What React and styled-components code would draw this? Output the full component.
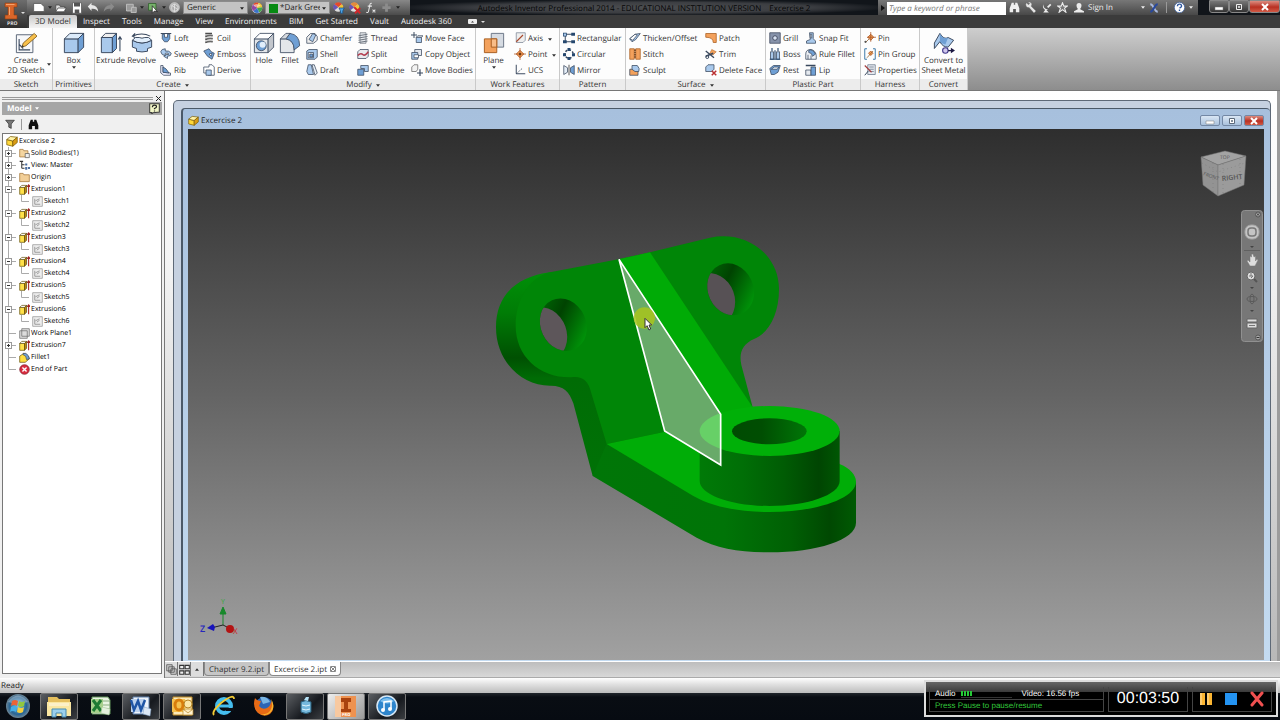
import React from "react";
import styled, { createGlobalStyle } from "styled-components";

const GlobalStyle = createGlobalStyle`
  * { box-sizing: border-box; }
  body { margin: 0; overflow: hidden; }
  button, input, select { font: inherit; color: inherit; margin: 0; padding: 0; border: 0; background: none; text-rendering: inherit; }
  ul { list-style: none; margin: 0; padding: 0; }
`;

const BLUE = "#a9c9ec";
const MID = "#6f9fd4";
const LINE = "#39485e";
const ORANGE = "#f3a15c";
const o = { stroke: LINE, strokeWidth: 1, strokeLinejoin: "round" };
const n = { fill: "none", stroke: LINE, strokeWidth: 1.3 };

const cube = (
  <g stroke={LINE} strokeWidth=".7" strokeLinejoin="round">
    <path fill={BLUE} d="M1 5h10v10H1z" />
    <path fill="#dcebfa" d="M1 5l4-4h10l-4 4z" />
    <path fill={MID} d="M11 5l4-4v10l-4 4z" />
  </g>
);
const yellowCube = (
  <g stroke="#7a5c08" strokeWidth="1" strokeLinejoin="round">
    <path fill="#ffd83a" d="M1 6l8 2v7L1 13z" />
    <path fill="#fff3a6" d="M1 6l5-4 9 1-6 5z" />
    <path fill="#d99b12" d="M9 8l6-5v7l-6 5z" />
  </g>
);

const ICONS = {
  sketch: (
    <g>
      <path fill="#f7f8fa" stroke="#596577" strokeWidth=".7" d="M1 2h12v13H1z" />
      <path {...n} strokeWidth=".8" d="M3 5v8h8M3 9l3 3" />
      <path fill="#f7c04b" stroke="#7a561c" strokeWidth=".6" d="M5 11l1-3 8-7 2 2-8 7z" />
      <path fill="#333" d="M5 11l.5-1.500 1 1z" />
    </g>
  ),
  box: cube,
  extrude: (
    <g>
      <g {...o} strokeWidth=".7"><path fill={BLUE} d="M1 4h8v11H1z" /><path fill="#eee" d="M1 4l3-3h8L9 4z" /><path fill={MID} d="M9 4l3-3v11l-3 3z" /></g>
      <path {...n} strokeWidth=".8" d="M14.500 14V4M13.200 5.500l1.300-2 1.300 2" />
    </g>
  ),
  revolve: (
    <g>
      <path fill={BLUE} {...o} strokeWidth=".7" d="M1 6q7 4 14 0v5l-3 1v2q-4 1-8 0v-2l-3-1z" />
      <path fill="#e1eefb" {...o} strokeWidth=".7" d="M1 6q2-3 5-2 2 1 4 0 3-1 5 2-7 4-14 0z" />
      <path {...n} strokeWidth=".8" d="M1 3q7-3 13 0M3 1L1 3l2 1" />
    </g>
  ),
  loft: <g><path {...n} d="M1 2h14" /><path fill={MID} {...o} d="M3 3h3v4h4V3h3v6l-3 4H6L3 9z" /></g>,
  sweep: <g><path fill={BLUE} {...o} d="M1 5q1-4 6-4v3q5-1 8 3 0 4-5 4v3L5 11l5-3v1q2 0 2-1-2-2-5-1v3q-5 0-6-5z" /></g>,
  rib: <g {...o}><path fill="#eef" d="M1 2h3v9l10 1v3H5l-4-3z" /><path fill={MID} d="M4 4q4 1 8 8l-8-1z" /></g>,
  coil: <g><path fill="none" stroke="#4c4c4c" strokeWidth="2" d="M3 2h9M3 6q5-2 10-1M3 10q5-2 10-1M3 14q5-2 10-1" /><path stroke="#999" fill="none" d="M3 4l10 0M3 8h10M3 12h10" /></g>,
  emboss: <g {...o}><path fill={MID} d="M1 4l7-3 3 4 4 2-3 8-6-4z" /><path fill="#fff" d="M8 8l4-1-1 4z" /></g>,
  derive: <g {...o}><path fill="#fff" d="M1 4h7V1h4l3 3v11H7v-3H1z" /><path fill={BLUE} d="M4 8h7v7H4z" /></g>,
  hole: (
    <g {...o} strokeWidth=".6">
      <path fill="#e3e6ea" d="M1 5h10v10H1z" /><path fill="#fff" d="M1 5l4-4h10l-4 4z" /><path fill="#c2c6cc" d="M11 5l4-4v10l-4 4z" />
      <circle cx="6" cy="10" r="3.600" fill={MID} /><circle cx="7" cy="9.300" r="2.200" fill="#e1eefb" stroke="none" />
    </g>
  ),
  fillet: (
    <g {...o} strokeWidth=".6">
      <path fill="#e3e6ea" d="M1 5v10h10v-3q0-6-6-7z" /><path fill={MID} d="M5 5l3-4q7 1 7 9l-4 3q0-7-6-8z" /><path fill="#d4d8dd" d="M1 5l4-4h3L5 5z" />
    </g>
  ),
  chamfer: <g {...o}><path fill="#eee" d="M1 7l5-5h6l3 4v5l-5 4H1z" /><path fill={BLUE} d="M4 10l5-8 4 2-4 9z" /></g>,
  shell: <g {...o}><path fill={BLUE} d="M1 4l3-2h11v10l-3 3H1z" /><path fill="#fff" d="M3 6h7v7H3z" /><path fill={MID} d="M5 8h4v4H5z" /></g>,
  draft: <g {...o}><path fill={BLUE} d="M3 1h4l3 13H3l-2-4z" /><path fill="#e8f0f8" d="M8 1h3l4 11-3 3z" /></g>,
  thread: <g><path fill="#e6e9ed" stroke="#6c737d" d="M4 1h8v14H4z" /><path stroke="#6c737d" strokeWidth="1.300" d="M2 5l12-2M2 8l12-2M2 11l12-2M2 14l12-2" /></g>,
  split: <g><path fill="#e8e9ed" {...o} d="M1 5l3-3h11v9l-3 3H1z" /><path fill="none" stroke="#b23a4c" strokeWidth="2" d="M1 10q4-4 7-1 3 2 7-4" /></g>,
  combine: <g {...o}><path fill={BLUE} d="M5 2h10v8h-5V6H5z" /><path fill={MID} d="M1 7h8v8H1z" /></g>,
  moveface: <g><path {...n} d="M4 0v8M0 4h8" /><path fill={BLUE} {...o} d="M7 7h7v7H7z" /><path fill="#fff" {...o} d="M7 7l2-2h7l-2 2z" /></g>,
  copyobj: <g {...o}><path fill="#e4e8ef" d="M5 2h9v8H5z" /><path fill={BLUE} d="M1 6h8v9H1z" /><path fill="#fff" d="M4 9h6v4H4z" /></g>,
  movebod: <g><path fill="#f3f3f3" stroke="#666" d="M1 4l3-3h5v6L7 10H1z" /><path {...n} strokeWidth="1.600" d="M12 7v9M8 12h8" /></g>,
  plane: (
    <g strokeWidth=".7">
      <path fill="#d6dbe2" stroke="#6a7686" d="M6 1h9v10H6z" /><path fill={ORANGE} stroke="#a85e20" d="M1 5h9v10H1z" /><path fill="#f9bd88" stroke="#a85e20" d="M6 5h4v6H6z" />
    </g>
  ),
  axis: <g><path fill="#eee" stroke="#7c8695" d="M3 1h12v10l-3 3H3z" /><path stroke="#a8472a" strokeWidth="1.500" d="M3 13L12 4" /></g>,
  point: <g><path fill={ORANGE} stroke="#a8521f" d="M8 3l5 5-5 5-5-5z" /><path stroke="#a8521f" d="M8 0v16M0 8h16" /><circle cx="8" cy="8" r="1.500" fill="#5d2b0d" /></g>,
  ucs: <g><path {...n} d="M3 1v12h12" /><path {...n} strokeDasharray="2 2" d="M3 13l9-8" /></g>,
  rect: <g fill="#26486f"><path {...n} d="M2 3h12M3 3v10M3 13h11" /><path d="M0 1h5v5H0zM11 1h5v4h-5zM0 11h5v4H0zM11 11h5v4h-5z" /><path fill={BLUE} d="M1 2h3v3H1z" /></g>,
  circ: <g><circle cx="8" cy="8" r="5.500" {...n} strokeWidth="2" strokeDasharray="3 2" /><path fill="#26486f" d="M6 0h4v4H6zM0 7h4v4H0zM12 7h4v4h-4zM6 12h4v4H6z" /></g>,
  mirror: <g {...o}><path fill="#e6eef7" d="M1 2l5 3v6l-5 3z" /><path fill={MID} d="M15 2l-5 3v6l5 3z" /><path stroke="#222" d="M8 1v14" /></g>,
  thicken: <g {...o}><path fill={BLUE} d="M1 9l7-6 7-1-6 8-5 3z" /><path fill="#fff" d="M1 9l7-6 3 1-6 7z" /></g>,
  stitch: <g><path fill={ORANGE} stroke="#a85e20" d="M1 1h6v14H1zM9 1h6v14H9z" /><path stroke="#6d3a10" strokeWidth="2" strokeDasharray="2 1" d="M8 2v12" /></g>,
  sculpt: <g {...o}><path fill={ORANGE} d="M1 7h11v8H1z" /><path fill={BLUE} d="M4 2h7q4 4 2 8H8L4 7z" /></g>,
  patch: <g><path fill={ORANGE} stroke="#a85e20" d="M1 2h14v12h-4q0-7-10-7z" /></g>,
  trim: <g><path fill={ORANGE} stroke="#a85e20" strokeWidth=".7" d="M9 2l6 3-4 4-5-1z" /><path {...n} strokeWidth="1.800" d="M1 4l11 9M1 11l10-4" /><circle cx="3" cy="12" r="2" {...n} /></g>,
  delface: <g><path fill={BLUE} {...o} d="M1 4l3-3h8v6l-3 3H1z" /><path stroke="#bb2f30" strokeWidth="2" d="M9 9l6 6M15 9l-6 6" /></g>,
  grill: <g><path fill="#8793ab" stroke="#3b465b" d="M1 1h14v14H1z" /><circle cx="8" cy="8" r="3" fill="#d8e2f2" stroke="#2a3245" /></g>,
  boss: <g {...o}><path fill={BLUE} d="M2 5h4v10H2zM10 5h4v10h-4z" /><path stroke="#26486f" strokeWidth="1.500" d="M4 0v4M12 0v4M8 3v12M1 15h14" /></g>,
  rest: <g {...o}><path fill={MID} d="M1 6l5-4h9l-3 9-5 3H3z" /><path fill="#e8f1fb" d="M3 7l4-3h6l-2 3z" /></g>,
  snap: <g {...o}><path fill={BLUE} d="M6 1h5v8l3 3v3H2v-3l5-2z" /><path fill="#fff" d="M7 3h2v5H7z" /></g>,
  rulefillet: <g {...o}><path fill="#edf1f6" d="M1 8q0-6 7-6 6 1 7 8v5H1z" /><path fill={MID} d="M5 3q5-2 9 5l-4 3Q9 6 5 6z" /><path d="M4 9v6M8 10v5" /></g>,
  lip: <g {...o}><path fill="#e6eaf0" d="M1 8h7v7H1z" /><path fill={MID} d="M8 4h6v11H8z" /><path strokeWidth="2" d="M1 2h13" /></g>,
  pin: <g><path stroke="#8e5a24" d="M2 14l9-9" /><path fill={ORANGE} stroke="#a8521f" d="M9 3l4 4-4 4-4-4z" /><path stroke="#a8521f" d="M9 0v13M4 7h12" /><circle cx="2" cy="13" r="1.500" fill="#555" /></g>,
  pingroup: <g><path {...n} stroke="#3c78a8" d="M4 1H1v14h3M12 1h3v14h-3" /><path fill={ORANGE} stroke="#a8521f" d="M9 4l3 3-3 3-3-3z" /><path stroke="#8e5a24" d="M4 13l8-9" /></g>,
  props: <g><path fill="#e6e9ef" stroke="#66758a" d="M5 1h10v13H5z" /><path stroke="#66758a" d="M7 4h6M7 7h6M7 10h6" /><path stroke="#a33a3a" strokeWidth="1.500" d="M1 2l9 9" /><path {...n} d="M1 15l5-6" /></g>,
  sheet: (
    <g>
      <path fill={BLUE} {...o} strokeWidth=".7" d="M1 8l4-7q3 5 6 3l4 2-4 5q-4 0-6-4l-4 5z" />
      <path fill={MID} d="M5 1q3 5 6 3l-2 5Q6 8 5 7z" />
      <circle cx="9" cy="13.500" r="2" fill="#d0c7ee" stroke="#41398a" strokeWidth=".8" /><path fill="#1c1842" d="M11 13h2v-1.500l3 2-3 2V14h-2z" />
    </g>
  ),
  part: yellowCube,
  folderBody: <g stroke="#9c6c2c"><path fill="#f4d5a0" d="M1 2h5l1 2h6v9H1z" /><path fill="#eee" stroke="#555" d="M9 8h6v6H9z" /></g>,
  view: <g stroke="#333" fill="none" strokeWidth="1.500"><path d="M1 2h5M4 2v10M4 7h4M4 12h4" /><path fill="#4a6da0" stroke="none" d="M9 5h3v3H9zM9 10h3v4H9zM13 10h3v3h-3z" /></g>,
  folder: <path fill="#f2cf98" stroke="#9c6c2c" d="M1 2h5l1 2h8v10H1z" />,
  extrusion: (
    <g stroke="#5e4c07" strokeLinejoin="round"><path fill="#ffe14a" d="M1 5h7v10H1z" /><path fill="#fff" d="M1 5l3-3h7L8 5z" /><path fill="#b98a12" d="M8 5l3-3v10l-3 3z" /><path stroke="#a32020" strokeWidth="1.500" d="M14 15V2M12 4l2-3 2 3" /></g>
  ),
  sketchItem: <g><path fill="#eee" stroke="#8d8d8d" d="M1 1h14v14H1z" /><path fill="none" stroke="#777" d="M4 4v8h8M5 7l6-3M7 9l4-3" /></g>,
  workplane: <path fill="#ddd" stroke="#666" d="M4 1h11v11H4zM1 4h11v11H1z" />,
  filletItem: <g stroke="#5e4c07"><path fill="#ffdf3e" d="M1 6l6-4q7 2 8 8l-6 5H1z" /><path fill={MID} stroke={LINE} d="M6 2h4q5 3 5 8l-4 1Q11 5 6 4z" /></g>,
  end: <g><circle cx="8" cy="8" r="7" fill="#d92c3f" stroke="#7c2530" /><path stroke="#fff" strokeWidth="2" d="M5 5l6 6M11 5l-6 6" /></g>,
  file: <path fill="#fff" stroke="#555" d="M2 3h9l4 4v6H2z" />,
  open: <g><path fill="#ddd" stroke="#444" d="M1 4h5l1 2h6v7H1z" /><path fill="#fff" stroke="#444" d="M4 8h11l-3 5H1z" /></g>,
  save: <g><path fill="#fff" stroke="#555" d="M2 1h12v14H2z" /><path fill="#555" d="M4 1h8v5H4zM5 10h6v5H5z" /></g>,
  undo: <path fill="#e8e8e8" d="M1 6l5-5v3q8 0 9 9-3-5-9-4v3z" />,
  redo: <path fill="#8b8b8b" d="M15 6l-5-5v3q-8 0-9 9 3-5 9-4v3z" />,
  ret: <g fill="#999" stroke="#ccc"><path d="M2 3h9v9H2z" /><path d="M9 7h6v7H8z" /></g>,
  pick: <g><path fill="#77b26b" stroke="#2e5c2a" d="M2 2h10v9H2z" /><path fill="#fff" stroke="#222" d="M7 5v10l3-3 4 1z" /></g>,
  render: <g><circle cx="8" cy="8" r="7" fill="#aaa" stroke="#e5e5e5" /><path fill="none" stroke="#eee" d="M4 5l4-2 5 3v5l-5 3-4-3zM8 3v11M4 5l9 6" /></g>,
  sphere: (
    <g><circle cx="8" cy="8" r="7" fill="#e9e9e9" /><path fill="#e54a2b" d="M8 8L3 3a7 7 0 0 1 7-2z" /><path fill="#f0c433" d="M8 8l2-7a7 7 0 0 1 5 6z" /><path fill="#45a84c" d="M8 8l7-1a7 7 0 0 1-4 7z" /><path fill="#3b73c8" d="M8 8l3 6a7 7 0 0 1-8-2z" /><path fill="#9447a4" d="M8 8l-5 4a7 7 0 0 1 0-9z" /><path fill="#fff" opacity=".5" d="M3 5q5-5 10 0-5 3-10 0z" /></g>
  ),
  adjust: (
    <g><circle cx="7" cy="7" r="6" fill="#dcdcdc" /><path fill="#e54a2b" d="M7 7L2 3a6 6 0 0 1 10 0z" /><path fill="#f0c433" d="M7 7l5-4a6 6 0 0 1 0 8z" /><path fill="#6a55b4" d="M7 7l-5 4a6 6 0 0 1 0-8z" /><path fill="#4aa5e8" stroke="#1b4f80" d="M8 8h7l-2 4v3h-3v-3z" /></g>
  ),
  clear: (
    <g><circle cx="7" cy="7" r="6" fill="#dcdcdc" /><path fill="#e58a3b" d="M7 7L2 3a6 6 0 0 1 10 0z" /><path fill="#f0c433" d="M7 7l5-4a6 6 0 0 1 0 8z" /><path fill="#6a55b4" d="M7 7l-5 4a6 6 0 0 1 0-8z" /><path stroke="#d2262a" strokeWidth="2.500" d="M7 7l8 8M15 8l-7 7" /></g>
  ),
  fx: <path fill="none" stroke="#e8e8e8" strokeWidth="1.500" d="M10 2q-3-1-3 3l-2 9q-1 2-3 1M4 6h6M11 11l4 4M15 11l-4 4" />,
  plus: <path stroke="#8c8c8c" strokeWidth="4" d="M8 2v12M2 8h12" />,
  binoc: <path d="M4 1h3v3h2V1h3l3 8v6h-5v-5H6v5H1V9z" fill="currentColor" />,
  filter: <path fill="#777" stroke="#222" d="M1 2h14l-5 6v7l-4-2V8z" />,
  wrench: <path fill="#e6e6e6" stroke="#666" strokeWidth=".5" d="M2 1l3 3 2-2-3-2q4-1 6 3l-1 3 7 7-3 3-7-8Q2 9 1 4z" />,
  dish: <path fill="#ececec" d="M2 2q0 8 8 8l-3 1 4 4H2l3-4Q0 8 2 2zM8 6l5-5 2 2-5 5z" />,
  star: <path fill="#777" stroke="#eee" strokeWidth="1.500" d="M8 1l2 5h5l-4 3 2 6-5-4-5 4 2-6-4-3h5z" />,
  user: <path fill="#ececec" d="M8 0q4 0 4 4 0 3-2 5v1l6 3v2H0v-2l6-3V9Q4 7 4 4q0-4 4-4z" />,
  exchange: <g fill="none" strokeWidth="3"><path stroke="#a9b9de" d="M2 2q3 0 6 6 3 6 6 6" /><path stroke="#27489e" d="M14 2q-3 0-6 6-3 6-6 6" /></g>,
  help: <g><circle cx="8" cy="8" r="7.500" fill="#fff" stroke="#345a9d" /><path fill="none" stroke="#2c559e" strokeWidth="2" d="M5 6q0-3 3-3t3 3q0 1-3 3M8 11v2" /></g>,
  helpGreen: <g><path fill="#f3f7c8" stroke="#3c3c3c" strokeWidth="1.500" d="M1 1h14v12l-9 1-2 2v-2H1z" /><path fill="none" stroke="#222" strokeWidth="1.800" d="M5 6q0-3 3-3t3 2q0 2-3 3v1M8 11v1.500" /></g>,
  cascade: <path fill="#ccc" stroke="#444" d="M1 1h8v9H1zM4 4h8v8H4zM7 7h8v8H7z" />,
  tile: <path fill="#eee" stroke="#333" strokeWidth="1.500" d="M1 2h6v5H1zM9 2h6v5H9zM1 10h6v5H1zM9 10h6v5H9z" />,
};

const Icon = ({ name, size = 12 }) => (
  <IconSvg viewBox="0 0 16 16" $size={size} aria-hidden="true">{ICONS[name]}</IconSvg>
);

const Arrow = ({ up }) => (
  <ArrowSvg viewBox="0 0 6 4" aria-hidden="true"><path fill="currentColor" d={up ? "M0 4l3-4 3 4z" : "M0 0h6L3 4z"} /></ArrowSvg>
);

const TABS = ["3D Model", "Inspect", "Tools", "Manage", "View", "Environments", "BIM", "Get Started", "Vault", "Autodesk 360"];

const PANELS = [
  { title: "Sketch", width: 53, big: [{ label: "Create\n2D Sketch", icon: "sketch", width: 51, menu: "side" }] },
  { title: "Primitives", width: 42, big: [{ label: "Box", icon: "box", width: 40, menu: "below" }] },
  {
    title: "Create", width: 156, menu: true,
    big: [{ label: "Extrude", icon: "extrude", width: 31 }, { label: "Revolve", icon: "revolve", width: 31 }],
    cols: [
      { width: 43, items: [["Loft", "loft"], ["Sweep", "sweep"], ["Rib", "rib"]] },
      { width: 46, items: [["Coil", "coil"], ["Emboss", "emboss"], ["Derive", "derive"]] },
    ],
  },
  {
    title: "Modify", width: 225, menu: true,
    big: [{ label: "Hole", icon: "hole", width: 26 }, { label: "Fillet", icon: "fillet", width: 26 }],
    cols: [
      { width: 51, items: [["Chamfer", "chamfer"], ["Shell", "shell"], ["Draft", "draft"]] },
      { width: 54, items: [["Thread", "thread"], ["Split", "split"], ["Combine", "combine"]] },
      { width: 64, items: [["Move Face", "moveface"], ["Copy Object", "copyobj"], ["Move Bodies", "movebod"]] },
    ],
  },
  {
    title: "Work Features", width: 84,
    big: [{ label: "Plane", icon: "plane", width: 35, menu: "below" }],
    cols: [{ width: 47, items: [["Axis", "axis", true], ["Point", "point", true], ["UCS", "ucs"]] }],
  },
  { title: "Pattern", width: 66, cols: [{ width: 64, items: [["Rectangular", "rect"], ["Circular", "circ"], ["Mirror", "mirror"]] }] },
  {
    title: "Surface", width: 140, menu: true,
    cols: [
      { width: 76, items: [["Thicken/Offset", "thicken"], ["Stitch", "stitch"], ["Sculpt", "sculpt"]] },
      { width: 60, items: [["Patch", "patch"], ["Trim", "trim"], ["Delete Face", "delface"]] },
    ],
  },
  {
    title: "Plastic Part", width: 95,
    cols: [
      { width: 36, items: [["Grill", "grill"], ["Boss", "boss"], ["Rest", "rest"]] },
      { width: 54, items: [["Snap Fit", "snap"], ["Rule Fillet", "rulefillet"], ["Lip", "lip"]] },
    ],
  },
  { title: "Harness", width: 59, cols: [{ width: 56, items: [["Pin", "pin"], ["Pin Group", "pingroup"], ["Properties", "props"]] }] },
  { title: "Convert", width: 48, big: [{ label: "Convert to\nSheet Metal", icon: "sheet", width: 46 }] },
];

const TREE = [
  ["Excercise 2", "part", 0, "root"],
  ["Solid Bodies(1)", "folderBody", 1, "+"],
  ["View: Master", "view", 1, "+"],
  ["Origin", "folder", 1, "+"],
  ...[1, 2, 3, 4, 5, 6].flatMap((i) => [
    [`Extrusion${i}`, "extrusion", 1, "-"],
    [`Sketch${i}`, "sketchItem", 2, ""],
  ]),
  ["Work Plane1", "workplane", 1, ""],
  ["Extrusion7", "extrusion", 1, "+"],
  ["Fillet1", "filletItem", 1, ""],
  ["End of Part", "end", 1, "last"],
];

const Branch = ({ depth, state }) => {
  if (depth === 0) return null;
  const width = depth === 1 ? 15 : 28;
  return (
    <BranchSvg viewBox={`0 0 ${width} 12`} $width={width} aria-hidden="true">
      <path stroke="#aaa" fill="none" d={state === "last" ? "M5.500 0v6.500H13" : "M5.500 0v12"} />
      {depth === 1 && state !== "last" && <path stroke="#aaa" d="M6 6.500h7" />}
      {depth === 2 && <path stroke="#aaa" fill="none" d="M18.500 0v6.500H26" />}
      {(state === "+" || state === "-") && (
        <g>
          <rect x="2.500" y="3.500" width="6" height="6" fill="#fff" stroke="#999" />
          <path stroke="#333" d={state === "+" ? "M4 6.500h3M5.500 5v3" : "M4 6.500h3"} />
        </g>
      )}
    </BranchSvg>
  );
};

const Model = () => (
  <ModelSvg viewBox="0 0 1200 1050" aria-hidden="true">
    <defs>
      <linearGradient id="edge" x1="0" y1="0" x2="0" y2="1">
        <stop offset="0" stopColor="#009008" /><stop offset=".2" stopColor="#007c06" /><stop offset=".42" stopColor="#005002" /><stop offset=".52" stopColor="#006c05" /><stop offset="1" stopColor="#007206" />
      </linearGradient>
      <linearGradient id="round" x1="0" y1="0" x2="1" y2="0">
        <stop offset="0" stopColor="#007a07" /><stop offset=".3" stopColor="#006f06" /><stop offset=".6" stopColor="#005c04" /><stop offset=".85" stopColor="#004502" /><stop offset="1" stopColor="#005703" />
      </linearGradient>
      <linearGradient id="base" x1="0" y1="0" x2="1" y2="0">
        <stop offset="0" stopColor="#007607" /><stop offset=".5" stopColor="#007407" /><stop offset=".75" stopColor="#006004" /><stop offset=".9" stopColor="#004802" /><stop offset="1" stopColor="#005a03" />
      </linearGradient>
      <linearGradient id="bore" x1="0" y1="0" x2=".7" y2="1">
        <stop offset="0" stopColor="#006d06" /><stop offset=".45" stopColor="#004301" /><stop offset="1" stopColor="#009509" />
      </linearGradient>
      <linearGradient id="hub" x1="0" y1="0" x2="1" y2="0">
        <stop offset="0" stopColor="#004b02" /><stop offset=".4" stopColor="#004e02" /><stop offset="1" stopColor="#007607" />
      </linearGradient>
      <clipPath id="leftHole"><ellipse cx="250" cy="314" rx="68" ry="81" transform="rotate(-25 250 314)" /></clipPath>
      <clipPath id="rightHole"><ellipse cx="752" cy="208" rx="68" ry="80" transform="rotate(-25 752 208)" /></clipPath>
      <clipPath id="pick"><path d="M417 118L722 583V735L554 633z" /></clipPath>
    </defs>
    <path fill="url(#edge)" d="M210 157C110 170 48 225 48 322C48 425 125 497 210 497C250 496 268 515 280 550L338 768L560 700V300z" />
    <path fill="#008607" d="M210 157L415 118L510 97L690 53C795 30 897 100 897 208C897 285 865 340 822 357C788 372 776 398 784 435L818 562L700 640L555 635L380 672L334 520C325 480 305 468 275 472C180 475 107 410 107 318C107 235 150 172 210 157z" />
    <ellipse cx="250" cy="314" rx="68" ry="81" fill="url(#bore)" transform="rotate(-25 250 314)" />
    <g clipPath="url(#leftHole)"><ellipse cx="192" cy="342" rx="68" ry="81" fill="#5d565a" transform="rotate(-20 192 342)" /></g>
    <ellipse cx="752" cy="208" rx="68" ry="80" fill="url(#bore)" transform="rotate(-25 752 208)" />
    <g clipPath="url(#rightHole)"><ellipse cx="696" cy="238" rx="68" ry="80" fill="#575155" transform="rotate(-20 696 238)" /></g>
    <path fill="url(#base)" d="M380 672L338 768L650 953C710 985 780 997 868 997C1010 997 1128 960 1128 908V785L900 760z" />
    <path fill="#00ad07" d="M380 672L640 828C700 862 780 876 868 876C1010 876 1128 835 1128 785C1128 765 1110 745 1080 733L900 600L722 600L555 635z" />
    <path fill="#00ab06" d="M415 118L510 97L818 562L722 620z" />
    <path fill="url(#round)" d="M659 633V783C659 824 752 858 868 858C984 858 1079 824 1079 783V633z" />
    <ellipse cx="869" cy="633" rx="210" ry="75" fill="#00b008" />
    <ellipse cx="868" cy="634" rx="112" ry="39" fill="url(#hub)" />
    <path fill="#68aa69" d="M417 118L722 583V735L554 633z" />
    <g clipPath="url(#pick)"><ellipse cx="869" cy="633" rx="210" ry="75" fill="#67d067" /></g>
    <path fill="none" stroke="#fff" strokeWidth="5" d="M417 118L722 583V735L554 633z" />
    <circle cx="493" cy="294" r="32" fill="#a9c61c" opacity=".85" />
    <path fill="#fff" stroke="#333" strokeWidth="3" d="M495 295V323L501 317L507 330L512 327L507 315H515z" />
  </ModelSvg>
);

const Triad = () => (
  <TriadSvg viewBox="0 0 44 42" aria-hidden="true">
    <path stroke="#17872b" d="M25 27V12" /><path stroke="#17872b" fill="#178a2b" d="M25 9l3 7h-6z" />
    <path stroke="#222" fill="none" d="M25 27l-12 3M25 27l6 3" />
    <path fill="#1713bb" d="M9 30l6-4 2 3-1 4z" /><circle cx="32" cy="31" r="4" fill="#b31313" />
    <text x="23" y="6" fill="#38a83f" fontSize="7">Y</text>
    <text x="2" y="34" fill="#2626bd" fontSize="9" fontWeight="600">Z</text>
    <text x="35" y="36" fill="#c62828" fontSize="8">X</text>
  </TriadSvg>
);

const ViewCube = () => (
  <CubeSvg viewBox="0 0 54 52" aria-hidden="true">
    <g stroke="#757575" strokeWidth=".5">
      <path fill="#a3a3a3" d="M4 8L28 2l21 5-28 9z" /><path fill="#939393" d="M4 8l17 8v31L6 36z" /><path fill="#9b9b9b" d="M21 16l28-9-2 29-26 11z" />
      <path fill="none" strokeDasharray="1 3" d="M5 14l16 9 27-9M16 14v30M26 15v30M43 10v28" />
    </g>
    <text x="25" y="32" fontSize="7" fontWeight="600" fill="#555" transform="rotate(-6 25 32)">RIGHT</text>
    <text x="6" y="26" fontSize="5" fill="#555" transform="rotate(20 6 26)">FRONT</text>
    <text x="23" y="10" fontSize="5" fill="#555">TOP</text>
  </CubeSvg>
);

const NavBar = () => (
  <NavSvg viewBox="0 0 22 132" aria-hidden="true">
    <rect x=".5" y=".5" width="21" height="131" rx="3" fill="#777" stroke="#909090" />
    <circle cx="17" cy="4.500" r="2.500" fill="#a8a8a8" stroke="#555" /><path stroke="#333" d="M16 3.500l2 2M18 3.500l-2 2" />
    <rect x="4" y="15" width="14" height="14" rx="6" fill="#c4c4c4" stroke="#a5a5a5" /><rect x="7" y="18" width="8" height="8" rx="3" fill="none" stroke="#777" strokeWidth="1.500" />
    <path fill="#444" d="M9 36h4l-2 2zM9 77h4l-2 2zM9 100h4l-2 2z" /><path stroke="#606060" d="M3 40.500h16" />
    <path fill="#ddd" stroke="#777" strokeWidth=".5" d="M9 56l-3-5 1-1 2 2V46l1.500 1v-3h1.500l1 3 1.500-1v5l1.500-2 1 1-3 6z" />
    <circle cx="10" cy="66" r="4" fill="#ddd" stroke="#666" /><path stroke="#555" strokeWidth="2" d="M13 69l3 3" /><path stroke="#777" fill="none" d="M8 66h4l-2 2M10 63v3" />
    <g fill="none" stroke="#5b5b5b"><ellipse cx="11" cy="89" rx="5" ry="2.500" /><ellipse cx="11" cy="89" rx="2" ry="5" /></g>
    <path fill="#ddd" stroke="#666" d="M6 109h10v3H6zM6 113h10v5H6z" /><path stroke="#777" d="M8 115.500h6" />
    <circle cx="17" cy="127.500" r="2.500" fill="#a8a8a8" stroke="#555" /><path stroke="#333" d="M15.500 127.500h3" />
  </NavSvg>
);

const WindowButtons = ({ main }) => (
  <WinGroup $main={main}>
    <WinButton $main={main} aria-label="Minimize"><svg width="10" height="8"><path fill="#fff" stroke="#777" strokeWidth=".5" d="M1 4h8v3H1z" /></svg></WinButton>
    <WinButton $main={main} aria-label="Restore"><svg width="10" height="8"><path fill={main ? "none" : "#fff"} stroke={main ? "#eee" : "#5c6a7b"} d="M2.500 1.500h5v5h-5zM4.500 3.500h1v1h-1z" /></svg></WinButton>
    <WinButton $main={main} $close aria-label="Close"><svg width="10" height="8"><path stroke="#fff" strokeWidth="2" d="M2 1l6 6M8 1L2 7" /></svg></WinButton>
  </WinGroup>
);

const TASKS = [
  { name: "Windows Explorer", open: true, art: <g><path fill="#e5bf5d" d="M4 3h9l2 2h11v17H4z" /><path fill="#fae7a2" d="M3 8h24v14H3z" /><path fill="#fff" opacity=".4" d="M5 9h20v3H5z" /><path fill="#9bd0ed" stroke="#468ab0" d="M8 15h14v8h-4v-4h-6v4H8z" /></g> },
  { name: "Excel", art: <g><path fill="#e9f4e2" stroke="#62935a" d="M7 3h16l2 3v14H7z" /><path stroke="#8aae80" d="M17 7h8M17 11h8M17 15h8" /><path fill="#a7d08c" d="M6 5h12v14H6z" /><path stroke="#1e7b33" strokeWidth="3" d="M8 6l8 11M16 6L8 17" /><path fill="#e3f0dc" stroke="#9cbf90" strokeWidth=".5" d="M17 13l8 2-1 6-8-2z" /></g> },
  { name: "Word", open: true, art: <g><path fill="#eef4fb" stroke="#5c7faa" d="M7 3h16v17H7z" /><path fill="#bcd2ee" d="M5 5h14v13H5z" /><path fill="none" stroke="#1f55a5" strokeWidth="2.500" d="M5 6l3 10 4-9 3 9 4-10" /><path fill="#dce8f5" stroke="#7e9cbe" strokeWidth=".5" d="M18 13l7 2-1 7-7-2z" /></g> },
  { name: "Outlook", open: true, art: <g><path fill="#fbeabb" stroke="#c08b24" d="M6 3h19v18H6z" /><path fill="#f5c14e" d="M5 5h13v13H5z" /><ellipse cx="12" cy="11" rx="4" ry="5" fill="none" stroke="#d87d0c" strokeWidth="3" /><circle cx="21" cy="10" r="4" fill="#fbe7a8" stroke="#b78626" /><path fill="#fff3d0" stroke="#b78626" strokeWidth=".7" d="M16 15h10v6H16zM16 15l5 4 5-4" /></g> },
  { name: "Internet Explorer", art: <g><circle cx="16" cy="12" r="7" fill="none" stroke="#45bdee" strokeWidth="4" /><path stroke="#45bdee" strokeWidth="3" d="M11 12h12" /><path fill="#0c1016" d="M18 14h8v3h-8z" /><path fill="none" stroke="#f2ca35" strokeWidth="1.800" d="M6 21Q3 18 13 9 26-1 26 5" /></g> },
  { name: "Firefox", art: <g><circle cx="15" cy="12" r="9" fill="#2c65b5" /><path fill="#79b5e3" d="M11 3q7-1 10 5l-7 2z" /><path fill="#e76a15" d="M6 4q2 3 6 3l-2 5q3 4 8 2 4-2 4-7 5 8-1 13-6 4-12-1-6-6-3-15z" /><path fill="#f7b22b" d="M22 5q5 7 0 13-5 5-10 2 8 1 10-5 2-4 0-10z" /></g> },
  { name: "Database", open: true, art: <g><path fill="#75b8dc" stroke="#285d79" d="M11 8q5-3 10 0v10q-5 3-10 0z" /><path fill="#b5e2f6" d="M14 6l2-3h3l-1 4z" /><path stroke="#e2f5fd" fill="none" d="M12 11q4 2 8 0M12 15q4 2 8 0" /></g> },
  { name: "Inventor", open: true, active: true, art: <g><path fill="#ee9250" d="M4 2h21v21H4z" /><path fill="#f8c9a0" d="M4 2h6v21H4z" /><path fill="#a9420e" d="M10 4h10v4h-3v7h3v3H10v-3h3V8h-3z" /><text x="11" y="22" fontSize="4" fontWeight="700" fill="#fff">PRO</text></g> },
  { name: "iTunes", open: true, art: <g><circle cx="15" cy="12" r="10" fill="#2e85cc" stroke="#d8e8f5" strokeWidth="1.500" /><path fill="#7fc0ee" d="M8 7q7-6 14 0-6 5-14 0z" /><path fill="none" stroke="#fff" strokeWidth="1.500" d="M12 16V8l7-1v8" /><circle cx="11" cy="16" r="2" fill="#fff" /><circle cx="18" cy="15" r="2" fill="#fff" /></g> },
];

export default function App() {
  return (
    <Shell>
      <GlobalStyle />
      <Header>
        <AppButton aria-label="Application menu">
          <svg width="27" height="28" viewBox="0 0 27 28">
            <path fill="#d9662a" stroke="#8c3c12" strokeWidth=".6" d="M5 3h12v4h-3v8h3v4H5v-4h3V7H5z" />
            <path fill="#f5a36d" d="M6 4h9l-1 1H6zM9 7h1v8H9z" />
            <path fill="#ddd" d="M21 12h4l-2 2z" />
            <text x="7" y="25" fontSize="5" fontWeight="700" fill="#ddd">PRO</text>
          </svg>
        </AppButton>
        <TitleBar>
          <QuickAccess>
            <Tool aria-label="New"><Icon name="file" size={13} /></Tool><Tiny><Arrow /></Tiny>
            <Tool aria-label="Open"><Icon name="open" /></Tool>
            <Tool aria-label="Save"><Icon name="save" /></Tool>
            <Tool aria-label="Undo"><Icon name="undo" /></Tool>
            <Tool aria-label="Redo"><Icon name="redo" /></Tool>
            <Tiny />
            <Tool aria-label="Return"><Icon name="ret" /></Tool><Tiny><Arrow /></Tiny>
            <Tool aria-label="Select"><Icon name="pick" /></Tool><Tiny><Arrow /></Tiny>
            <Tool aria-label="Appearance"><Icon name="render" size={11} /></Tool>
            <Picker $width={65}>
              <select aria-label="Material"><option>Generic</option></select><Arrow />
            </Picker>
            <Tool aria-label="Colour wheel"><Icon name="sphere" /></Tool>
            <Picker $width={65}>
              <Swatch />
              <select aria-label="Appearance colour"><option>*Dark Green</option></select><Arrow />
            </Picker>
            <Tool aria-label="Adjust"><Icon name="adjust" /></Tool>
            <Tool aria-label="Clear"><Icon name="clear" /></Tool>
            <Tool aria-label="Parameters"><Icon name="fx" size={11} /></Tool>
            <Tool aria-label="Add"><Icon name="plus" size={11} /></Tool>
            <Tiny><Arrow /></Tiny>
          </QuickAccess>
          <AppTitle>
            <span>Autodesk Inventor Professional 2014 - EDUCATIONAL INSTITUTION VERSION</span>
            <span>Excercise 2</span>
          </AppTitle>
          <InfoCenter>
            <SearchToggle aria-label="Collapse"><svg width="4" height="6"><path fill="#111" d="M0 0l4 3-4 3z" /></svg></SearchToggle>
            <Search aria-label="Search" placeholder="Type a keyword or phrase" />
            <Tool aria-label="Find"><Icon name="binoc" size={11} /></Tool>
            <Tool aria-label="Subscription"><Icon name="wrench" size={11} /></Tool>
            <Tool aria-label="Communication"><Icon name="dish" size={10} /></Tool>
            <Tool aria-label="Favorites"><Icon name="star" size={11} /></Tool>
            <SignIn><Icon name="user" size={10} />Sign In</SignIn>
            <Tiny><Arrow /></Tiny>
            <Tool aria-label="Exchange"><Icon name="exchange" size={10} /></Tool>
            <Divider />
            <Tool aria-label="Help"><Icon name="help" size={11} /></Tool>
            <Tiny><Arrow /></Tiny>
          </InfoCenter>
          <WindowButtons main />
        </TitleBar>
        <RibbonTabs>
          {TABS.map((tab, i) => <RibbonTab key={tab} $active={i === 0}>{tab}</RibbonTab>)}
          <RibbonToggle aria-label="Minimize ribbon">
            <svg width="18" height="7"><rect x="0" y="1" width="9" height="5" rx="1" fill="#eee" /><path fill="#333" d="M3 4.500h3L4.500 3z" /><path fill="#ddd" d="M13 3h4l-2 2z" /></svg>
          </RibbonToggle>
        </RibbonTabs>
      </Header>

      <Ribbon>
        {PANELS.map((panel) => (
          <Panel key={panel.title} $width={panel.width}>
            <PanelBody $center={!panel.cols}>
              {panel.big?.map((b) => (
                <BigButton key={b.label} $width={b.width}>
                  <Icon name={b.icon} size={22} />
                  <BigLabel>{b.label}</BigLabel>
                  {b.menu === "below" && <Arrow />}
                  {b.menu === "side" && <SideArrow><Arrow /></SideArrow>}
                </BigButton>
              ))}
              {panel.cols?.map((col) => (
                <Column key={col.items[0][0]} $width={col.width}>
                  {col.items.map(([label, icon, menu]) => (
                    <SmallButton key={label}><Icon name={icon} />{label}{menu && <Arrow />}</SmallButton>
                  ))}
                </Column>
              ))}
            </PanelBody>
            <PanelTitle>{panel.title}{panel.menu && <Arrow />}</PanelTitle>
          </Panel>
        ))}
      </Ribbon>

      <Main>
        <Browser>
          <Grip><i /><CloseGrip aria-label="Close panel"><svg width="5" height="5"><path stroke="#222" d="M0 0l5 5M5 0L0 5" /></svg></CloseGrip></Grip>
          <BrowserHead><BrowserTitle>Model<Arrow /></BrowserTitle><Tool aria-label="Browser help"><Icon name="helpGreen" size={11} /></Tool></BrowserHead>
          <BrowserTools>
            <Tool aria-label="Filter"><Icon name="filter" size={10} /></Tool><Divider />
            <Tool aria-label="Find in browser"><Icon name="binoc" size={11} /></Tool>
          </BrowserTools>
          <Tree>
            {TREE.map(([label, icon, depth, state]) => (
              <TreeRow key={label} $root={depth === 0}>
                <Branch depth={depth} state={state} />
                <Icon name={icon} size={depth === 0 ? 12 : 11} />{label}
              </TreeRow>
            ))}
          </Tree>
        </Browser>
        <Workspace>
          <Mdi>
            <BackWindow>
              <FrontWindow>
                <WindowTitle><Icon name="part" size={11} /><span>Excercise 2</span><WindowButtons /></WindowTitle>
                <Viewport>
                  <Model />
                  <ViewCube />
                  <NavBar />
                  <Triad />
                </Viewport>
              </FrontWindow>
            </BackWindow>
          </Mdi>
          <DocTabs>
            <DocTool aria-label="Cascade"><Icon name="cascade" size={11} /></DocTool>
            <DocTool aria-label="Tile"><Icon name="tile" size={11} /></DocTool>
            <DocTool aria-label="List documents"><Arrow up /></DocTool>
            <DocTab>Chapter 9.2.ipt</DocTab>
            <DocTab $active>Excercise 2.ipt<svg width="6" height="8"><path fill="none" stroke="#888" d="M.5.5h5v5h-5zM1 1l4 4M5 1L1 5" /></svg></DocTab>
          </DocTabs>
        </Workspace>
      </Main>

      <StatusBar>Ready</StatusBar>
      <Taskbar>
        <StartButton aria-label="Start">
          <svg width="28" height="27" viewBox="0 0 28 27">
            <defs><radialGradient id="orb"><stop offset="0" stopColor="#70c4ee" /><stop offset=".7" stopColor="#286493" /><stop offset="1" stopColor="#6f8796" /></radialGradient></defs>
            <circle cx="14" cy="13" r="12" fill="url(#orb)" /><path fill="#fff" opacity=".3" d="M4 9q10-13 20 0-10 3-20 0z" />
            <path fill="#eb6436" d="M8 8q3-2 6 0l-1 5q-3-2-6 0z" /><path fill="#92c83e" d="M15 8q3 2 6 0l-1 5q-3 2-6 0z" /><path fill="#45aee6" d="M7 14q3-2 6 0l-1 5q-3-2-6 0z" /><path fill="#f6cf3d" d="M14 14q3 2 6 0l-1 5q-3 2-6 0z" />
          </svg>
        </StartButton>
        {TASKS.map((t) => (
          <Task key={t.name} aria-label={t.name} $open={t.open} $active={t.active}><svg width="30" height="25" viewBox="0 0 30 25">{t.art}</svg></Task>
        ))}
      </Taskbar>

      <Recorder>
        <RecInfo>
          <RecTop>
            <RecCell>Audio<Meter><i /><i /><i /><i /></Meter></RecCell>
            <RecCell>Video: 16.56 fps</RecCell>
          </RecTop>
          <RecHint>Press Pause to pause/resume</RecHint>
        </RecInfo>
        <RecTime>00:03:50</RecTime>
        <RecButtons>
          <button aria-label="Pause"><svg width="14" height="14"><path fill="#fbb532" d="M1 1h5v12H1zM8 1h5v12H8z" /><path fill="#fff" opacity=".3" d="M1 1h2v12H1zM8 1h2v12H8z" /></svg></button>
          <button aria-label="Stop"><svg width="14" height="14"><path fill="#2494f3" d="M1 1h12v12H1z" /></svg></button>
          <button aria-label="Cancel"><svg width="16" height="16"><path stroke="#f05050" strokeWidth="3" strokeLinecap="round" d="M3 2l10 12M13 2L3 14" /></svg></button>
        </RecButtons>
      </Recorder>
    </Shell>
  );
}

const Shell = styled.div`
  position: relative;
  display: flex;
  flex-direction: column;
  height: 100vh;
  overflow: hidden;
  background: #f0f0f0;
  color: #333;
  font-family: "Open Sans", "Noto Sans", sans-serif;
  font-size: 8px;
  line-height: 10px;
  text-rendering: geometricPrecision;
  svg { display: block; flex: none; }
`;

const IconSvg = styled.svg`
  width: ${({ $size }) => $size}px;
  height: ${({ $size }) => $size}px;
`;

const ArrowSvg = styled.svg`
  width: 4px;
  height: 3px;
`;

const Header = styled.header`
  display: grid;
  grid-template-columns: 27px 1fr;
  grid-template-rows: 15px 13px;
  flex: none;
  background: #3b3b3b;
`;

const AppButton = styled.button`
  grid-row: 1 / 3;
  background: linear-gradient(#6d6d6d, #2e2e2e);
`;

const TitleBar = styled.div`
  display: flex;
  min-width: 0;
  background: #11151a;
`;

const QuickAccess = styled.div`
  display: flex;
  align-items: center;
  gap: 1px;
  width: 383px;
  padding-left: 4px;
  color: #222;
  background: linear-gradient(#888, #4b4b4b);
`;

const Tool = styled.button`
  display: flex;
  align-items: center;
  justify-content: center;
  min-width: 15px;
  height: 13px;
`;

const Tiny = styled.span`
  display: flex;
  justify-content: center;
  width: 5px;
`;

const Picker = styled.label`
  display: flex;
  align-items: center;
  gap: 2px;
  width: ${({ $width }) => $width}px;
  height: 13px;
  padding: 1px 3px 0;
  background: #c3c3c3;
  border: 1px solid #8b8b8b;
  select {
    flex: 1;
    min-width: 0;
    appearance: none;
    outline: none;
  }
`;

const Swatch = styled.i`
  width: 9px;
  height: 9px;
  flex: none;
  background: #078a12;
`;

const AppTitle = styled.h1`
  display: flex;
  flex: 1;
  gap: 8px;
  justify-content: center;
  align-items: center;
  margin: 0;
  min-width: 0;
  padding-top: 2px;
  white-space: nowrap;
  font-size: 8px;
  font-weight: 400;
  color: #050505;
  background: radial-gradient(ellipse at center, #4a4c4f 0, #3c3e42 50%, #11151a 75%);
`;

const InfoCenter = styled.div`
  display: flex;
  align-items: center;
  gap: 1px;
  width: 320px;
  color: #eee;
  background: linear-gradient(#777, #484848);
`;

const SearchToggle = styled.button`
  width: 8px;
  padding-left: 3px;
`;

const Search = styled.input`
  width: 119px;
  height: 13px;
  margin-top: 2px;
  padding: 0 2px;
  background: #fff;
  outline: none;
  &::placeholder {
    color: #777;
    font-style: italic;
    opacity: 1;
  }
`;

const SignIn = styled.button`
  display: flex;
  align-items: center;
  gap: 4px;
  width: 68px;
  padding-left: 3px;
`;

const Divider = styled.i`
  width: 1px;
  height: 11px;
  margin: 0 4px;
  background: #999;
`;

const WinGroup = styled.div`
  display: flex;
  gap: ${({ $main }) => ($main ? 0 : 2)}px;
  margin: ${({ $main }) => ($main ? "0 0 2px 11px" : "0 0 0 auto")};
`;

const WinButton = styled.button`
  display: flex;
  align-items: center;
  justify-content: center;
  width: ${({ $main, $close }) => ($main ? ($close ? 31 : 20) : 20)}px;
  height: ${({ $main }) => ($main ? 13 : 11)}px;
  border: 1px solid ${({ $main }) => ($main ? "#888" : "#7388a5")};
  border-radius: ${({ $main }) => ($main ? "0 0 3px 3px" : "2px")};
  background: ${({ $main, $close }) =>
    $close ? "linear-gradient(#dc8c80, #b83022 55%, #d15a45)" : $main ? "linear-gradient(#777, #333)" : "linear-gradient(#d9e6f4, #a9c1dc)"};
`;

const RibbonTabs = styled.nav`
  display: flex;
  align-items: stretch;
  padding-left: 2px;
`;

const RibbonTab = styled.button`
  padding: 1px 6px 0;
  line-height: 12px;
  color: ${({ $active }) => ($active ? "#333" : "#f2f2f2")};
  background: ${({ $active }) => ($active ? "linear-gradient(#c9c9c9, #f4f4f4)" : "none")};
  border-radius: 2px 2px 0 0;
`;

const RibbonToggle = styled.button`
  margin-left: 10px;
`;

const Ribbon = styled.div`
  display: flex;
  flex: none;
  height: 63px;
  background: linear-gradient(#cecece, #8d8d8d);
  border-bottom: 1px solid #777;
`;

const Panel = styled.section`
  display: flex;
  flex-direction: column;
  width: ${({ $width }) => $width}px;
  background: #fdfdfd;
  border-right: 1px solid #c9c9c9;
`;

const PanelBody = styled.div`
  display: flex;
  flex: 1;
  justify-content: ${({ $center }) => ($center ? "center" : "flex-start")};
  padding-top: 2px;
`;

const PanelTitle = styled.div`
  display: flex;
  align-items: center;
  justify-content: center;
  gap: 4px;
  height: 11px;
  padding-top: 1px;
  background: #ececec;
`;

const BigButton = styled.button`
  position: relative;
  display: flex;
  flex-direction: column;
  align-items: center;
  width: ${({ $width }) => $width}px;
  padding-top: 2px;
`;

const BigLabel = styled.span`
  margin-top: 2px;
  white-space: pre;
`;

const SideArrow = styled.span`
  position: absolute;
  right: 1px;
  bottom: 13px;
`;

const Column = styled.div`
  display: flex;
  flex-direction: column;
  width: ${({ $width }) => $width}px;
`;

const SmallButton = styled.button`
  display: flex;
  align-items: center;
  gap: 2px;
  height: 16px;
  padding: 2px 0 0 3px;
  white-space: nowrap;
  ${IconSvg} { margin-bottom: 2px; }
  ${ArrowSvg} { margin-left: 3px; }
`;

const Main = styled.main`
  display: flex;
  flex: 1;
  min-height: 0;
`;

const Browser = styled.aside`
  display: flex;
  flex-direction: column;
  width: 164px;
  padding: 4px 2px 4px;
`;

const Grip = styled.div`
  display: flex;
  align-items: center;
  gap: 3px;
  height: 6px;
  i {
    flex: 1;
    height: 3px;
    border: solid #999;
    border-width: 1px 0;
  }
`;

const CloseGrip = styled.button`
  width: 6px;
`;

const BrowserHead = styled.div`
  display: flex;
  align-items: center;
  justify-content: space-between;
  height: 13px;
  margin-top: 1px;
  padding-left: 5px;
  color: #fff;
  background: #a6a6a6;
`;

const BrowserTitle = styled.h2`
  display: flex;
  align-items: center;
  gap: 3px;
  margin: 0;
  font-size: 8px;
`;

const BrowserTools = styled.div`
  display: flex;
  align-items: center;
  height: 18px;
  color: #111;
`;

const Tree = styled.ul`
  flex: 1;
  padding-top: 1px;
  border: 1px solid #777;
  background: #fff;
`;

const TreeRow = styled.li`
  display: flex;
  align-items: center;
  gap: 1px;
  height: 12px;
  padding: 2px 0 0 ${({ $root }) => ($root ? 3 : 0)}px;
  font-size: 7px;
  color: #000;
  svg { margin-bottom: 2px; }
`;

const BranchSvg = styled.svg`
  width: ${({ $width }) => $width}px;
  height: 12px;
`;

const Workspace = styled.div`
  display: flex;
  flex-direction: column;
  flex: 1;
  min-width: 0;
  border-left: 1px solid #777;
`;

const Mdi = styled.div`
  flex: 1;
  display: flex;
  min-height: 0;
  padding: 9px 6px 0 8px;
  background: linear-gradient(#fff, #f4f4f4 30%, #b8b8b8);
  border-right: 3px solid #9c9c9c;
`;

const BackWindow = styled.div`
  display: flex;
  flex: 1;
  min-width: 0;
  padding: 7px 0 0 7px;
  background: #c6d1e0;
  border: 1px solid #5e6977;
  border-bottom: 0;
  border-radius: 5px 5px 0 0;
`;

const FrontWindow = styled.section`
  display: flex;
  flex-direction: column;
  flex: 1;
  min-width: 0;
  padding: 0 6px 1px 5px;
  background: linear-gradient(#a7c0dd, #c4dbf1);
  border: 1px solid #4b5968;
  border-width: 1px 0 0 2px;
  border-radius: 4px 4px 0 0;
`;

const WindowTitle = styled.div`
  display: flex;
  align-items: center;
  gap: 2px;
  height: 20px;
  padding-top: 3px;
  color: #222;
`;

const Viewport = styled.div`
  position: relative;
  flex: 1;
  min-height: 0;
  overflow: hidden;
  background: linear-gradient(#2e2e2e, #646464 50%, #a1a1a1);
`;

const ModelSvg = styled.svg`
  position: absolute;
  left: 292px;
  top: 91px;
  width: 400px;
  height: 350px;
`;

const CubeSvg = styled.svg`
  position: absolute;
  right: 13px;
  top: 20px;
  width: 54px;
  height: 52px;
`;

const NavSvg = styled.svg`
  position: absolute;
  right: 1px;
  top: 81px;
  width: 22px;
  height: 132px;
`;

const TriadSvg = styled.svg`
  position: absolute;
  left: 10px;
  bottom: 20px;
  width: 44px;
  height: 42px;
`;

const DocTabs = styled.div`
  display: flex;
  flex: none;
  height: 17px;
  padding-bottom: 1px;
  border-top: 1px solid #fff;
  border-bottom: 1px solid #aaa;
  background: linear-gradient(#bdbdbd, #d8d8d8);
`;

const DocTool = styled.button`
  display: flex;
  align-items: center;
  justify-content: center;
  width: 13px;
  border-right: 1px solid #777;
  background: #ddd;
`;

const DocTab = styled.button`
  display: flex;
  align-items: center;
  gap: 3px;
  padding: 2px 4px 0;
  border: 1px solid #888;
  border-top: 0;
  border-radius: 0 0 4px 4px;
  background: ${({ $active }) => ($active ? "#fff" : "#c6c6c6")};
`;

const StatusBar = styled.footer`
  flex: none;
  height: 15px;
  padding: 1px 0 0 1px;
  line-height: 14px;
  color: #222;
  background: linear-gradient(#fff, #e2e2e2 40%, #bcbcbc);
`;

const Taskbar = styled.div`
  display: flex;
  align-items: stretch;
  gap: 3px;
  flex: none;
  height: 27px;
  padding-left: 4px;
  background: linear-gradient(#20252b, #090d13 15%, #070b12);
`;

const StartButton = styled.button`
  width: 33px;
`;

const Task = styled.button`
  display: flex;
  align-items: center;
  justify-content: center;
  width: 38px;
  border: 1px solid ${({ $open }) => ($open ? "#777" : "transparent")};
  border-radius: 2px;
  background: ${({ $open, $active }) =>
    $active ? "linear-gradient(135deg, #eee, #999)" : $open ? "linear-gradient(135deg, #5b5e62, #16191e 60%, #3b3e42)" : "none"};
`;

const Recorder = styled.section`
  position: absolute;
  right: 2px;
  bottom: 3px;
  display: flex;
  gap: 4px;
  width: 354px;
  height: 37px;
  padding: 5px 4px 3px 3px;
  border: 2px solid #ddd;
  background: linear-gradient(#666, #3a3a3a 30%, #000 31%);
  color: #fff;
  font-family: "Liberation Sans", Arial, sans-serif;
`;

const RecInfo = styled.div`
  flex: 1;
  border: 1px solid #444;
  border-top: 0;
`;

const RecTop = styled.div`
  display: flex;
  height: 13px;
  border-bottom: 1px solid #444;
`;

const RecCell = styled.div`
  display: flex;
  align-items: center;
  gap: 6px;
  width: 50%;
  padding: 2px 0 0 5px;
`;

const Meter = styled.div`
  display: flex;
  gap: 1px;
  width: 51px;
  height: 7px;
  border-bottom: 1px solid #333;
  i {
    width: 2px;
    height: 5px;
    background: #25c936;
  }
`;

const RecHint = styled.div`
  padding: 1px 0 0 5px;
  color: #32c83c;
`;

const RecTime = styled.div`
  display: flex;
  align-items: center;
  justify-content: center;
  width: 80px;
  border: 1px solid #444;
  border-top: 0;
  font-size: 16px;
`;

const RecButtons = styled.div`
  display: flex;
  align-items: center;
  justify-content: space-around;
  width: 80px;
  border: 1px solid #444;
  border-top: 0;
`;
